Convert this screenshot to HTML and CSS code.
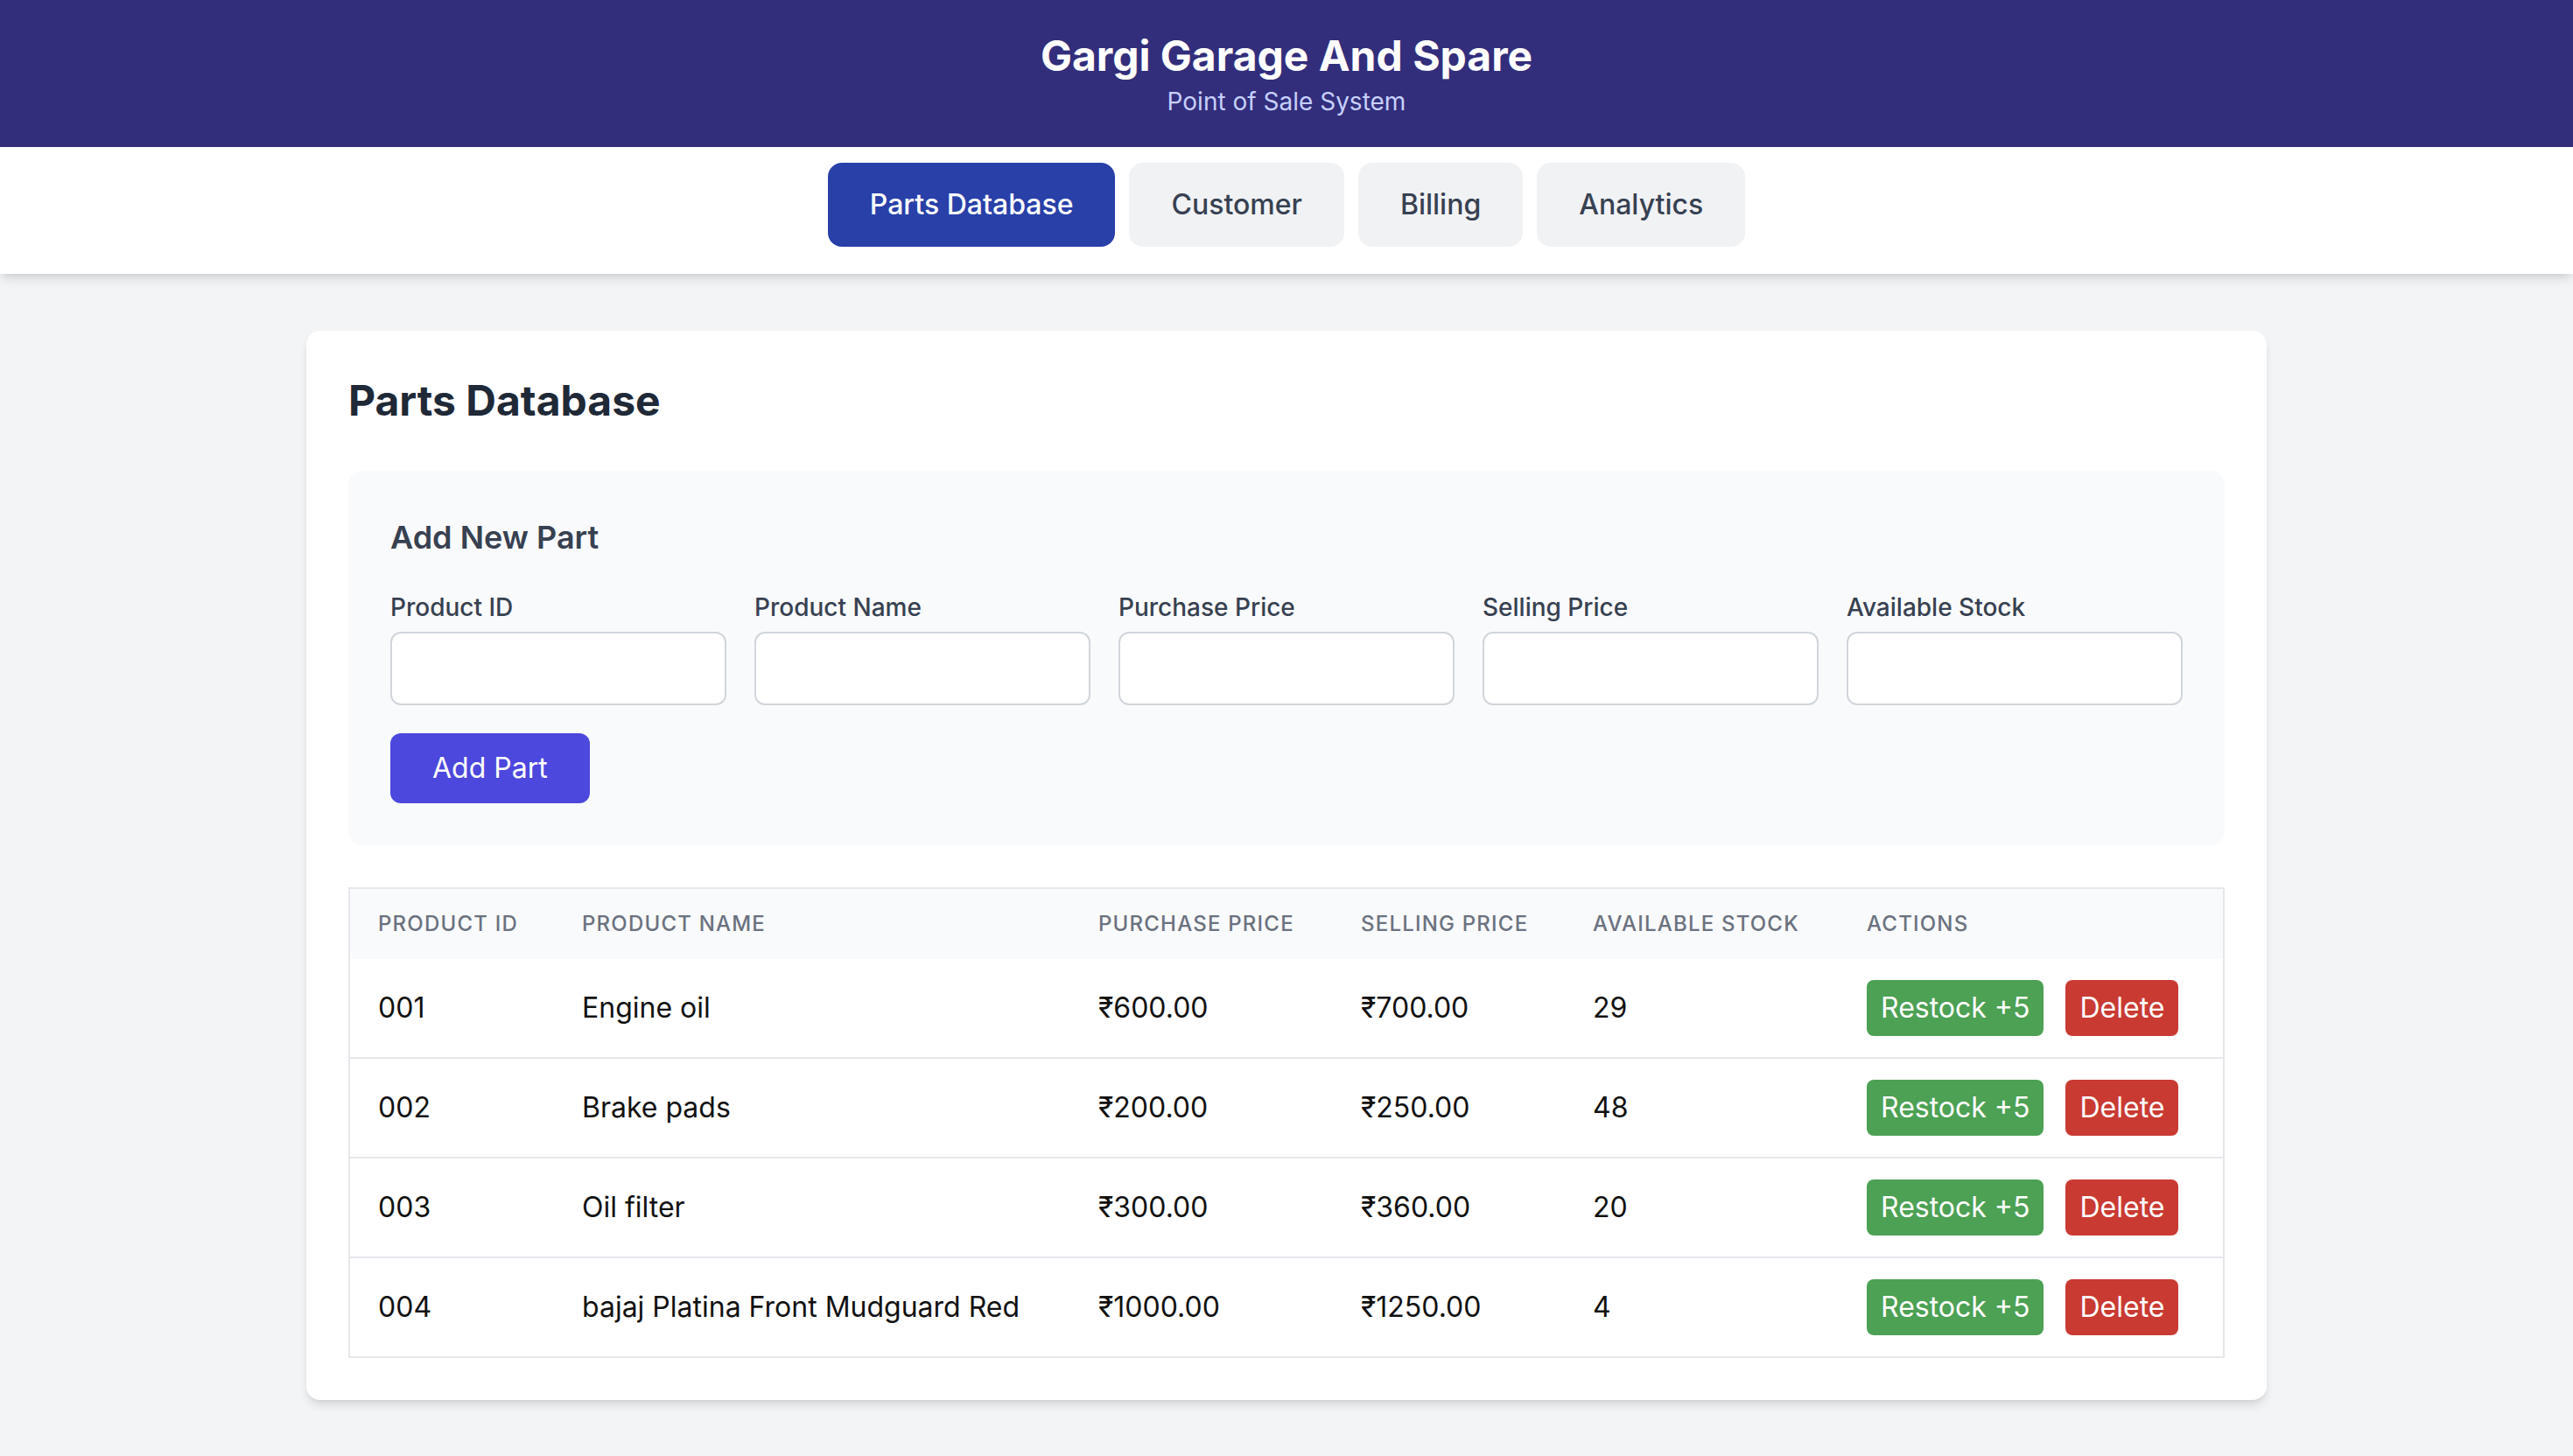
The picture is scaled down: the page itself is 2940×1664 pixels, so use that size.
FILE: index.html
```html
<!DOCTYPE html>
<html lang="en">
<head>
<meta charset="utf-8">
<title>Gargi Garage And Spare - POS</title>
<link rel="stylesheet" href="styles.css">
</head>
<body>
<header class="site-header">
  <h1 class="site-title">Gargi Garage And Spare</h1>
  <p class="site-subtitle">Point of Sale System</p>
</header>
<nav class="tabs">
  <button class="tab tab-active">Parts Database</button>
  <button class="tab">Customer</button>
  <button class="tab">Billing</button>
  <button class="tab">Analytics</button>
</nav>
<main class="main">
  <section class="card">
    <h2 class="card-title">Parts Database</h2>
    <div class="form-panel">
      <h3 class="form-title">Add New Part</h3>
      <div class="form-grid">
        <label class="field"><span class="field-label">Product ID</span><input class="field-input" type="text"></label>
        <label class="field"><span class="field-label">Product Name</span><input class="field-input" type="text"></label>
        <label class="field"><span class="field-label">Purchase Price</span><input class="field-input" type="text"></label>
        <label class="field"><span class="field-label">Selling Price</span><input class="field-input" type="text"></label>
        <label class="field"><span class="field-label">Available Stock</span><input class="field-input" type="text"></label>
      </div>
      <button class="btn-add">Add Part</button>
    </div>
    <div class="table-wrap">
      <table class="parts-table">
        <colgroup>
          <col class="c-id"><col class="c-name"><col class="c-pp"><col class="c-sp"><col class="c-stock"><col class="c-act">
        </colgroup>
        <thead>
          <tr><th>Product ID</th><th>Product Name</th><th>Purchase Price</th><th>Selling Price</th><th>Available Stock</th><th>Actions</th></tr>
        </thead>
        <tbody>
          <tr><td>001</td><td>Engine oil</td><td>₹600.00</td><td>₹700.00</td><td>29</td><td><div class="actions"><button class="btn-restock">Restock +5</button><button class="btn-delete">Delete</button></div></td></tr>
          <tr><td>002</td><td>Brake pads</td><td>₹200.00</td><td>₹250.00</td><td>48</td><td><div class="actions"><button class="btn-restock">Restock +5</button><button class="btn-delete">Delete</button></div></td></tr>
          <tr><td>003</td><td>Oil filter</td><td>₹300.00</td><td>₹360.00</td><td>20</td><td><div class="actions"><button class="btn-restock">Restock +5</button><button class="btn-delete">Delete</button></div></td></tr>
          <tr><td>004</td><td>bajaj Platina Front Mudguard Red</td><td>₹1000.00</td><td>₹1250.00</td><td>4</td><td><div class="actions"><button class="btn-restock">Restock +5</button><button class="btn-delete">Delete</button></div></td></tr>
        </tbody>
      </table>
    </div>
  </section>
</main>
</body>
</html>
```
FILE: styles.css
```css
* { box-sizing: border-box; }
html, body { margin: 0; padding: 0; }
body {
  background: #f3f4f6;
  font-family: Inter, "Noto Sans", "Liberation Sans", sans-serif;
  color: #111827;
}
button { font-family: inherit; cursor: pointer; }

.site-header {
  background: #322e7c;
  padding: 32px 0;
  text-align: center;
  color: #fff;
}
.site-title {
  margin: 0;
  font-size: 48px;
  line-height: 64px;
  font-weight: 700;
}
.site-subtitle {
  margin: 0;
  font-size: 28px;
  line-height: 40px;
  color: #c7d0fb;
}

.tabs {
  background: #fff;
  display: flex;
  justify-content: center;
  gap: 16px;
  padding: 18px 0 31px;
  box-shadow: 0 8px 12px -2px rgba(0,0,0,0.1), 0 4px 8px -4px rgba(0,0,0,0.1);
  position: relative;
}
.tab {
  border: 0;
  border-radius: 16px;
  padding: 24px 48px;
  font-size: 32px;
  line-height: 48px;
  font-weight: 500;
  background: #f1f2f4;
  color: #374151;
}
.tab-active {
  background: #2840a8;
  color: #fff;
}

.main {
  max-width: 2240px;
  margin: 0 auto;
  padding: 65px 0 61px;
}
.card {
  background: #fff;
  border-radius: 16px;
  padding: 48px;
  box-shadow: 0 8px 12px -2px rgba(0,0,0,0.1), 0 4px 8px -4px rgba(0,0,0,0.1);
}
.card-title {
  margin: 0 0 48px;
  font-size: 48px;
  line-height: 64px;
  font-weight: 700;
  color: #1f2937;
}

.form-panel {
  background: #f9fafb;
  border-radius: 16px;
  padding: 48px;
  margin-bottom: 48px;
}
.form-title {
  margin: 0 0 32px;
  font-size: 36px;
  line-height: 56px;
  font-weight: 600;
  color: #374151;
}
.form-grid {
  display: grid;
  grid-template-columns: repeat(5, minmax(0, 1fr));
  gap: 32px;
}
.field { display: flex; flex-direction: column; min-width: 0; }
.field-label {
  font-size: 28px;
  line-height: 40px;
  font-weight: 500;
  color: #374151;
  margin-bottom: 8px;
}
.field-input {
  width: 100%;
  min-width: 0;
  height: 84px;
  border: 2px solid #d1d5db;
  border-radius: 12px;
  background: #fff;
  padding: 16px 24px;
  font-size: 32px;
  font-family: inherit;
}
.btn-add {
  margin-top: 32px;
  background: #4c47dd;
  color: #fff;
  border: 0;
  border-radius: 12px;
  padding: 16px 48px;
  font-size: 32px;
  line-height: 48px;
  font-weight: 400;
}

.table-wrap {
  border: 2px solid #e5e7eb;
}
.parts-table {
  width: 100%;
  border-collapse: collapse;
  table-layout: fixed;
}
.c-id { width: 233px; }
.c-name { width: 590px; }
.c-pp { width: 300px; }
.c-sp { width: 265px; }
.c-stock { width: 313px; }
.parts-table thead tr { background: #f9fafb; }
.parts-table th {
  text-align: left;
  padding: 24px 32px;
  font-size: 24px;
  line-height: 32px;
  font-weight: 500;
  text-transform: uppercase;
  letter-spacing: 0.05em;
  color: #6b7280;
  white-space: nowrap;
}
.parts-table td {
  padding: 24px 32px;
  font-size: 32px;
  line-height: 48px;
  color: #111111;
  vertical-align: middle;
  white-space: nowrap;
}
.parts-table tbody tr + tr td { border-top: 2px solid #e5e7eb; }
.actions { display: flex; gap: 25px; }
.btn-restock, .btn-delete {
  border: 0;
  border-radius: 8px;
  padding: 8px 16px;
  font-size: 32px;
  line-height: 48px;
  color: #fff;
}
.btn-restock { background: #4ca154; }
.btn-delete { background: #c93a32; }
```
